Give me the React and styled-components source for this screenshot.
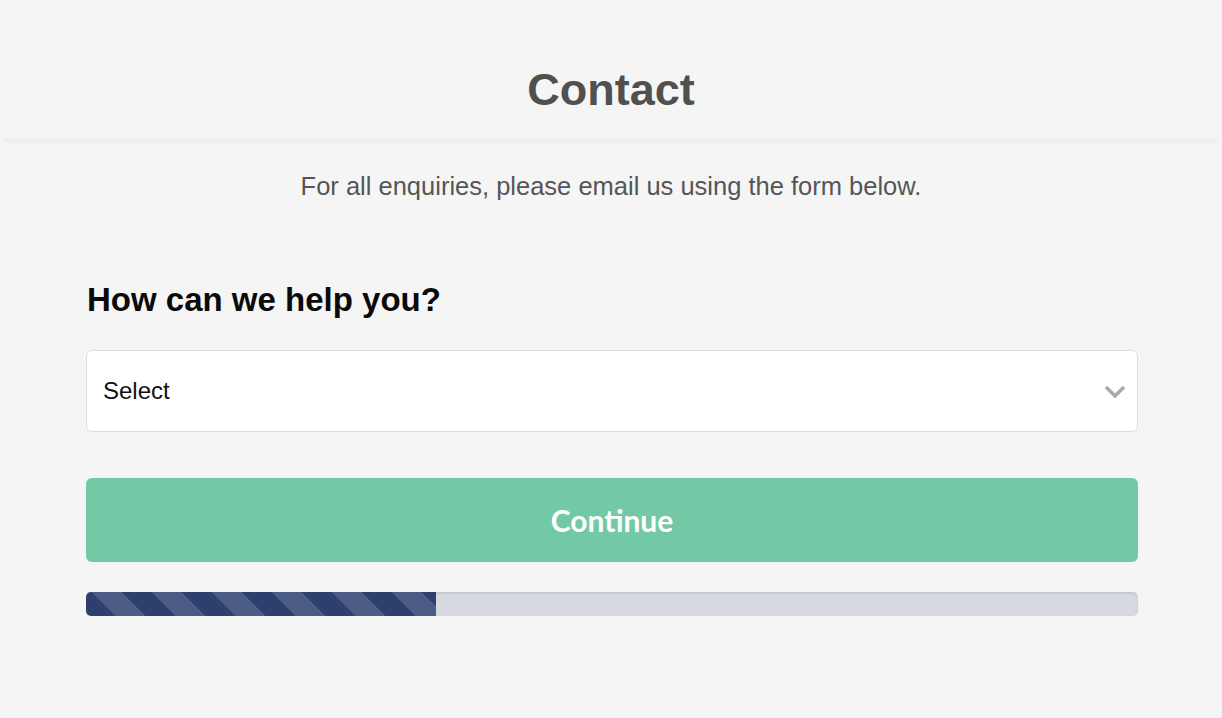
import React from "react";
import styled, { createGlobalStyle } from "styled-components";

const GlobalStyle = createGlobalStyle`
  html, body {
    margin: 0;
    padding: 0;
    background: #f5f5f5;
    font-family: "Liberation Sans", Arial, sans-serif;
  }
`;

const Page = styled.div`
  min-height: 718px;
  background: #f5f5f5;
  padding-top: 63px;
  box-sizing: border-box;
`;

const Title = styled.h1`
  margin: 0;
  text-align: center;
  font-size: 45px;
  line-height: 54px;
  font-weight: 700;
  color: #505050;
`;

const Divider = styled.div`
  margin: 21px 4px 0;
  height: 7px;
  border-radius: 3px;
  background: linear-gradient(#ededed, #f0f0f0 70%, #f3f3f3);
`;

const Intro = styled.p`
  margin: 26px 0 0;
  text-align: center;
  font-size: 25.5px;
  line-height: 30px;
  color: #555;
`;

const Form = styled.div`
  width: 1052px;
  margin: 80px 0 0 calc(50% - 525px);
  display: flex;
  flex-direction: column;
`;

const Question = styled.h2`
  margin: 0 0 0 1px;
  font-size: 33px;
  line-height: 38px;
  font-weight: 700;
  color: #0a0a0a;
`;

const SelectBox = styled.div`
  margin-top: 31px;
  height: 82px;
  box-sizing: border-box;
  background: #fff;
  border: 1px solid #dedede;
  border-radius: 6px;
  display: flex;
  align-items: center;
  justify-content: space-between;
  padding: 0 11px 0 16px;
  font-size: 24px;
  color: #111;
`;

const Chevron = styled.svg`
  width: 22px;
  height: 14px;
  margin-top: 2px;
`;

const Button = styled.button`
  margin-top: 46px;
  height: 84px;
  border: none;
  border-radius: 6px;
  background: #73c9a5;
  color: #fff;
  font-family: Lato, "Liberation Sans", sans-serif;
  font-weight: 700;
  font-size: 30px;
  cursor: pointer;
`;

const Track = styled.div`
  margin-top: 30px;
  height: 24px;
  border-radius: 5px;
  background: #d6d9df;
  box-shadow: inset 0 2px 2px rgba(0, 0, 0, 0.08);
  overflow: hidden;
  display: flex;
`;

const Fill = styled.div`
  height: 100%;
  background: repeating-linear-gradient(
    45deg,
    #2d3f6c 0,
    #2d3f6c 21px,
    #4b5c85 21px,
    #4b5c85 42.4px
  );
`;

export default function App() {
  const progress = 350 / 1052;
  return (
    <Page>
      <GlobalStyle />
      <Title>Contact</Title>
      <Divider />
      <Intro>For all enquiries, please email us using the form below.</Intro>
      <Form>
        <Question>How can we help you?</Question>
        <SelectBox>
          <span>Select</span>
          <Chevron viewBox="0 0 22 14">
            <polyline
              points="2,2 11,11 20,2"
              fill="none"
              stroke="#aaaaaa"
              strokeWidth="3.6"
            />
          </Chevron>
        </SelectBox>
        <Button>Continue</Button>
        <Track>
          <Fill style={{ width: `${progress * 100}%` }} />
        </Track>
      </Form>
    </Page>
  );
}
